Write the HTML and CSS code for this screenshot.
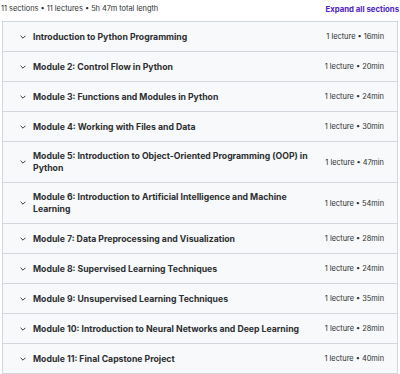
FILE: index.html
```html
<!DOCTYPE html>
<html>
<head>
<meta charset="utf-8">
<link rel="stylesheet" href="styles.css">
</head>
<body>
<div class="curriculum">
  <div class="summary">
    <span class="stats">11 sections • 11 lectures • 5h 47m total length</span>
    <button class="expand">Expand all sections</button>
  </div>
  <div class="panel">
    <div class="section"><span class="chev"><svg viewBox="0 0 10 6" width="6" height="4"><path d="M1 1l4 4 4-4" fill="none" stroke="#2d2f31" stroke-width="1.6"/></svg></span><span class="title">Introduction to Python Programming</span><span class="meta">1 lecture • 16min</span></div>
    <div class="section"><span class="chev"><svg viewBox="0 0 10 6" width="6" height="4"><path d="M1 1l4 4 4-4" fill="none" stroke="#2d2f31" stroke-width="1.6"/></svg></span><span class="title">Module 2: Control Flow in Python</span><span class="meta">1 lecture • 20min</span></div>
    <div class="section"><span class="chev"><svg viewBox="0 0 10 6" width="6" height="4"><path d="M1 1l4 4 4-4" fill="none" stroke="#2d2f31" stroke-width="1.6"/></svg></span><span class="title">Module 3: Functions and Modules in Python</span><span class="meta">1 lecture • 24min</span></div>
    <div class="section"><span class="chev"><svg viewBox="0 0 10 6" width="6" height="4"><path d="M1 1l4 4 4-4" fill="none" stroke="#2d2f31" stroke-width="1.6"/></svg></span><span class="title">Module 4: Working with Files and Data</span><span class="meta">1 lecture • 30min</span></div>
    <div class="section"><span class="chev"><svg viewBox="0 0 10 6" width="6" height="4"><path d="M1 1l4 4 4-4" fill="none" stroke="#2d2f31" stroke-width="1.6"/></svg></span><span class="title">Module 5: Introduction to Object-Oriented Programming (OOP) in Python</span><span class="meta">1 lecture • 47min</span></div>
    <div class="section"><span class="chev"><svg viewBox="0 0 10 6" width="6" height="4"><path d="M1 1l4 4 4-4" fill="none" stroke="#2d2f31" stroke-width="1.6"/></svg></span><span class="title">Module 6: Introduction to Artificial Intelligence and Machine Learning</span><span class="meta">1 lecture • 54min</span></div>
    <div class="section"><span class="chev"><svg viewBox="0 0 10 6" width="6" height="4"><path d="M1 1l4 4 4-4" fill="none" stroke="#2d2f31" stroke-width="1.6"/></svg></span><span class="title">Module 7: Data Preprocessing and Visualization</span><span class="meta">1 lecture • 28min</span></div>
    <div class="section"><span class="chev"><svg viewBox="0 0 10 6" width="6" height="4"><path d="M1 1l4 4 4-4" fill="none" stroke="#2d2f31" stroke-width="1.6"/></svg></span><span class="title">Module 8: Supervised Learning Techniques</span><span class="meta">1 lecture • 24min</span></div>
    <div class="section"><span class="chev"><svg viewBox="0 0 10 6" width="6" height="4"><path d="M1 1l4 4 4-4" fill="none" stroke="#2d2f31" stroke-width="1.6"/></svg></span><span class="title">Module 9: Unsupervised Learning Techniques</span><span class="meta">1 lecture • 35min</span></div>
    <div class="section"><span class="chev"><svg viewBox="0 0 10 6" width="6" height="4"><path d="M1 1l4 4 4-4" fill="none" stroke="#2d2f31" stroke-width="1.6"/></svg></span><span class="title">Module 10: Introduction to Neural Networks and Deep Learning</span><span class="meta">1 lecture • 28min</span></div>
    <div class="section"><span class="chev"><svg viewBox="0 0 10 6" width="6" height="4"><path d="M1 1l4 4 4-4" fill="none" stroke="#2d2f31" stroke-width="1.6"/></svg></span><span class="title">Module 11: Final Capstone Project</span><span class="meta">1 lecture • 40min</span></div>
  </div>
</div>
</body>
</html>
```
FILE: styles.css
```css
html, body {
  margin: 0;
  padding: 0;
  background: #ffffff;
}
body {
  font-family: "Inter", "Liberation Sans", sans-serif;
  color: #2d2f31;
}
.curriculum {
  width: 400px;
}
.summary {
  display: flex;
  justify-content: space-between;
  align-items: center;
  height: 21px;
  padding: 0 1px 4px 1px;
  box-sizing: border-box;
}
.stats {
  font-size: 7.4px;
  color: #2d2f31;
}
.expand {
  border: 0;
  background: none;
  padding: 0;
  font-family: inherit;
  font-size: 7.8px;
  font-weight: 700;
  color: #5022c3;
}
.panel {
  margin: 0 2px;
  border: 1px solid #d1d7dc;
  border-bottom: 0;
}
.section {
  display: flex;
  align-items: center;
  min-height: 30px;
  padding: 8px 13px 8px 17px;
  box-sizing: border-box;
  background: #f7f9fa;
  border-bottom: 1px solid #d1d7dc;
}
.chev {
  width: 13px;
  flex: none;
  display: flex;
  align-items: center;
}
.title {
  flex: 1;
  font-size: 8.7px;
  font-weight: 700;
  line-height: 12px;
  padding-right: 6px;
}
.meta {
  flex: none;
  font-size: 7.4px;
  color: #2d2f31;
}
```
